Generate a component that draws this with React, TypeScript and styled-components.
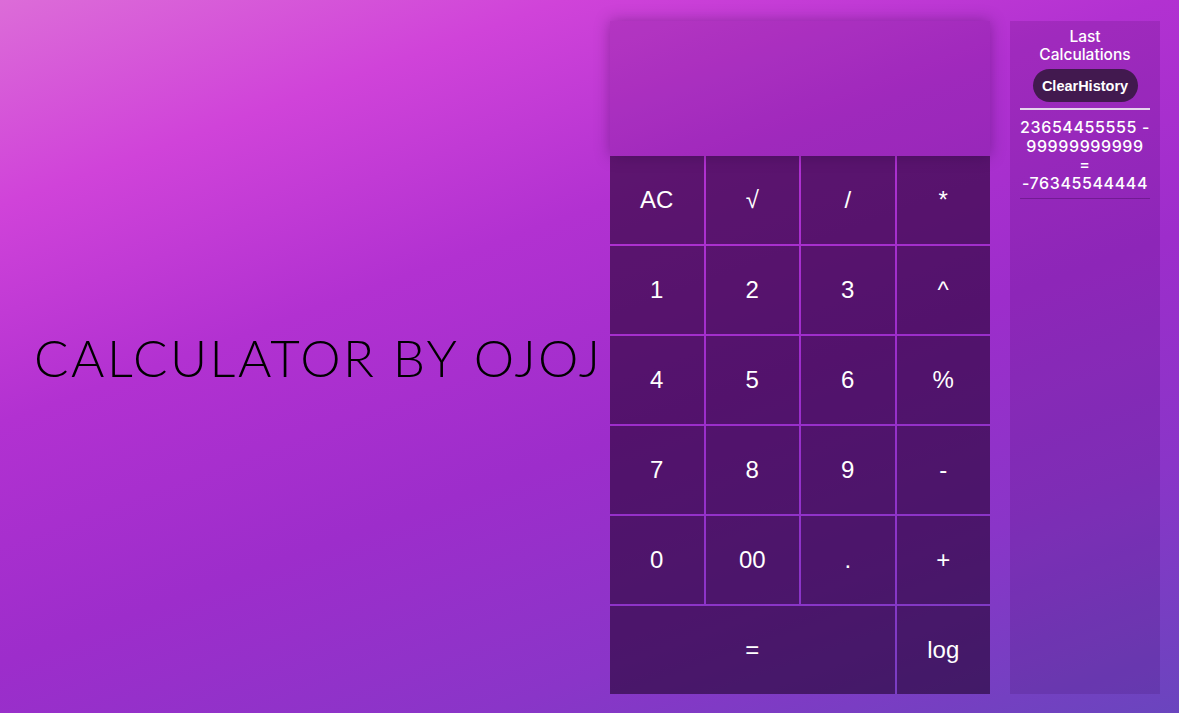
import React from "react";
import styled, { createGlobalStyle } from "styled-components";

const GlobalStyle = createGlobalStyle`
  * { box-sizing: border-box; }
  html, body { margin: 0; padding: 0; height: 100%; }
  body {
    background: linear-gradient(160deg, #dc6cd8 0%, #d043d9 18%, #b231d1 37%, #9d2dcb 58%, #8a35c8 78%, #6a45be 100%);
    min-height: 100vh;
    overflow: hidden;
  }
`;

const Page = styled.div`
  display: flex;
  align-items: stretch;
  height: 713px;
  padding: 21px 19px 19px 0;
`;

const TitleArea = styled.div`
  flex: 1;
  display: flex;
  align-items: center;
  padding-left: 34px;
  padding-top: 0;
`;

const Title = styled.h1`
  margin: 0;
  font-family: "Lato", "Open Sans", sans-serif;
  font-weight: 300;
  font-size: 51px;
  letter-spacing: 2.5px;
  color: #000;
  white-space: nowrap;
`;

const Calculator = styled.div`
  width: 380px;
  display: flex;
  flex-direction: column;
`;

const Display = styled.div`
  position: relative;
  z-index: 1;
  height: 135px;
  background: rgba(60, 0, 80, 0.16);
  box-shadow: 0 0 14px rgba(40, 0, 60, 0.35);
`;

const Keys = styled.div`
  display: grid;
  grid-template-columns: repeat(4, 1fr);
  grid-auto-rows: 88px;
  gap: 2px;
`;

const Key = styled.button<{ $span?: number }>`
  grid-column: span ${(p) => p.$span ?? 1};
  border: none;
  margin: 0;
  padding: 0;
  background: rgba(30, 0, 40, 0.58);
  color: #fff;
  font-family: "Liberation Sans", Arial, sans-serif;
  font-size: 24px;
  display: flex;
  align-items: center;
  justify-content: center;
  cursor: pointer;
`;

const History = styled.aside`
  width: 150px;
  margin-left: 20px;
  background: rgba(50, 0, 70, 0.14);
  display: flex;
  flex-direction: column;
  align-items: center;
  padding-top: 7px;
  font-family: "Inter", "Open Sans", sans-serif;
  color: #fff;
`;

const HistoryTitle = styled.div`
  font-size: 15.5px;
  line-height: 18px;
  text-align: center;
  font-weight: 500;
`;

const ClearButton = styled.button`
  margin-top: 5px;
  width: 105px;
  height: 33px;
  border: none;
  border-radius: 17px;
  background: #42194f;
  color: #fff;
  font-family: "Liberation Sans", Arial, sans-serif;
  font-weight: 700;
  font-size: 14.5px;
  cursor: pointer;
`;

const Divider = styled.div`
  align-self: stretch;
  margin: 6px 10px 0;
  height: 2px;
  background: #e6d4ee;
`;

const Entry = styled.div`
  align-self: stretch;
  margin: 0 10px;
  padding: 8px 0 6px;
  border-bottom: 1px solid rgba(40, 0, 60, 0.3);
  text-align: center;
  font-size: 16px;
  line-height: 18.5px;
  font-weight: 500;
  letter-spacing: 0.6px;
`;

const keys: { label: string; span?: number }[] = [
  { label: "AC" }, { label: "√" }, { label: "/" }, { label: "*" },
  { label: "1" }, { label: "2" }, { label: "3" }, { label: "^" },
  { label: "4" }, { label: "5" }, { label: "6" }, { label: "%" },
  { label: "7" }, { label: "8" }, { label: "9" }, { label: "-" },
  { label: "0" }, { label: "00" }, { label: "." }, { label: "+" },
  { label: "=", span: 3 }, { label: "log" },
];

export default function App() {
  return (
    <>
      <GlobalStyle />
      <Page>
        <TitleArea>
          <Title>CALCULATOR BY OJOJ</Title>
        </TitleArea>
        <Calculator>
          <Display />
          <Keys>
            {keys.map((k) => (
              <Key key={k.label} $span={k.span}>
                {k.label}
              </Key>
            ))}
          </Keys>
        </Calculator>
        <History>
          <HistoryTitle>
            Last
            <br />
            Calculations
          </HistoryTitle>
          <ClearButton>ClearHistory</ClearButton>
          <Divider />
          <Entry>
            23654455555 -
            <br />
            99999999999
            <br />=<br />
            -76345544444
          </Entry>
        </History>
      </Page>
    </>
  );
}
